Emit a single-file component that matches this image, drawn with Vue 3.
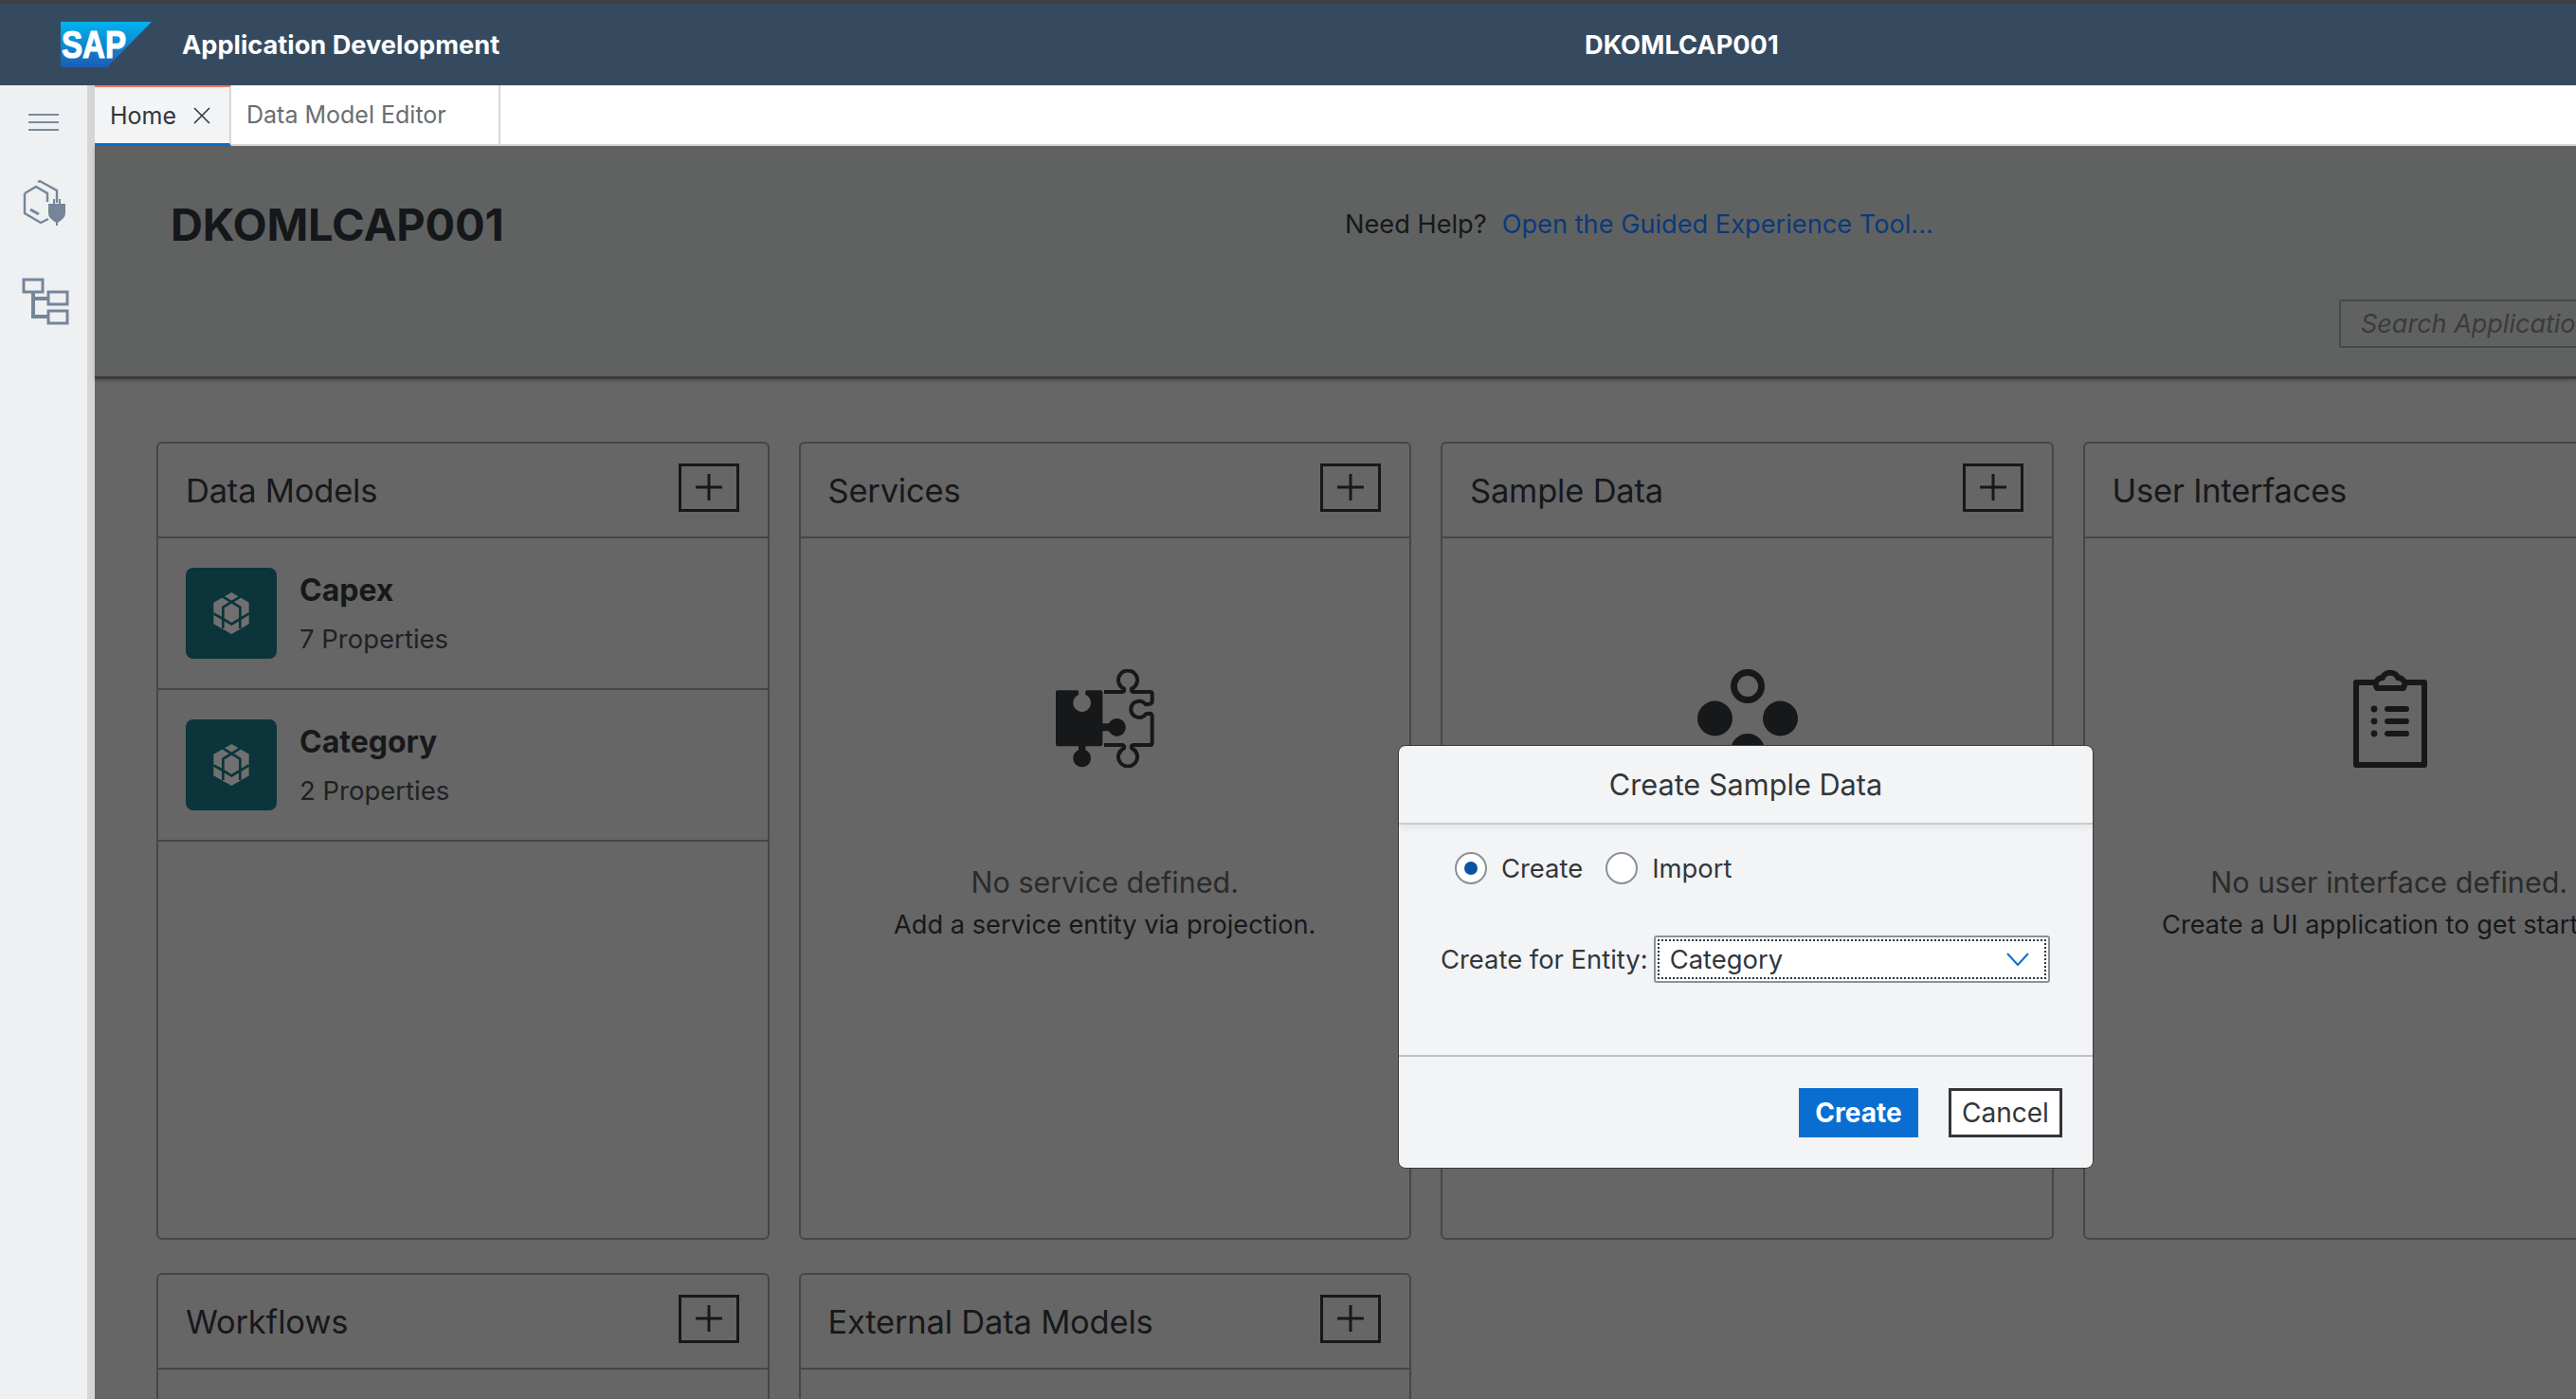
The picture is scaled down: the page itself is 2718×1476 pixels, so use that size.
<script setup>
const cards = [
  { title: 'Data Models', models: [
    { name: 'Capex', props: '7 Properties' },
    { name: 'Category', props: '2 Properties' },
  ] },
  { title: 'Services', icon: 'puzzle', empty: 'No service defined.', hint: 'Add a service entity via projection.' },
  { title: 'Sample Data', icon: 'dots', empty: '', hint: '' },
  { title: 'User Interfaces', icon: 'clipboard', empty: 'No user interface defined.', hint: 'Create a UI application to get started.', noAdd: true },
  { title: 'Workflows' },
  { title: 'External Data Models' },
]
</script>

<template>
  <div class="page">
    <header class="shell">
      <div class="brand">
        <svg class="logo" viewBox="0 0 96 48" width="96" height="48">
          <defs>
            <linearGradient id="sapGrad" x1="0" y1="0" x2="0" y2="1">
              <stop offset="0" stop-color="#00b4ee" />
              <stop offset="1" stop-color="#1d5cb5" />
            </linearGradient>
          </defs>
          <polygon points="0,0 96,0 49,48 0,48" fill="url(#sapGrad)" />
          <text x="1" y="38" class="logo-text" textLength="68" lengthAdjust="spacingAndGlyphs">SAP</text>
        </svg>
        <span class="app-name">Application Development</span>
      </div>
      <span class="app-id">DKOMLCAP001</span>
    </header>

    <div class="below">
      <aside class="rail">
        <div class="menu"><i></i><i></i><i></i></div>
        <svg class="rail-icon plug" viewBox="0 0 48 48" width="48" height="48" fill="none" stroke="#75869a" stroke-width="2.4">
          <path d="M2 10 L2 31 L19 41 L27 37" />
          <path d="M2 10 L14 3 L26 10 L26 19" />
          <path d="M16 -2 L18 -3 L36 7 L36 20" />
          <path d="M8 27 L17 32" stroke-width="3" />
          <path d="M28 22 h16 v9 q0 5 -8 9 q-8 -4 -8 -9 z M33 22 v-6 M39 22 v-6 M36 40 v4" fill="#75869a" stroke-width="2" />
        </svg>
        <svg class="rail-icon tree" viewBox="0 0 50 50" width="50" height="50" fill="#eef0f2" stroke="#75869a" stroke-width="3">
          <rect x="2" y="2" width="20" height="13" />
          <rect x="28" y="15" width="20" height="13" />
          <rect x="28" y="35" width="20" height="13" />
          <path d="M12 15 V41 H28 M12 22 H28" fill="none" stroke-width="4" />
        </svg>
      </aside>

      <div class="workspace">
        <nav class="tabs">
          <div class="tab active">Home <span class="close">
            <svg viewBox="0 0 18 18" width="18" height="18" stroke="#32363a" stroke-width="1.6"><path d="M1 1 L17 17 M17 1 L1 17" /></svg>
          </span></div>
          <div class="tab">Data Model Editor</div>
        </nav>

        <main class="content">
          <section class="head">
            <div class="head-row">
              <h1>DKOMLCAP001</h1>
              <p class="help">Need Help?<a>Open the Guided Experience Tool...</a></p>
            </div>
            <div class="search">Search Application Content</div>
          </section>

          <section class="grid">
            <article v-for="card in cards" :key="card.title" class="card">
              <div class="card-head">
                <h2>{{ card.title }}</h2>
                <button v-if="!card.noAdd" class="add">
                  <svg viewBox="0 0 28 28" width="28" height="28" stroke="#17181a" stroke-width="3"><path d="M14 0 V28 M0 14 H28" /></svg>
                </button>
              </div>

              <div v-for="m in card.models" :key="m.name" class="row">
                <div class="tile">
                  <svg viewBox="0 0 288 288" width="96" height="96">
                    <polygon points="145,78 200,110 200,178 145,210 88,178 88,110" fill="#707070" />
                    <path d="M118 92 L172 125 V192 M172 92 L118 125 V192 M118 125 L145 108 L172 125 M88 145 L118 162 L145 178 L172 162 L200 145" fill="none" stroke="#0b343b" stroke-width="8" />
                  </svg>
                </div>
                <div>
                  <div class="row-name">{{ m.name }}</div>
                  <div class="row-props">{{ m.props }}</div>
                </div>
              </div>

              <div v-if="card.icon" class="empty">
                <svg v-if="card.icon === 'puzzle'" viewBox="0 0 312 312" width="104" height="104">
                  <path d="M6 67 H68 Q74 67 72 81 A28 28 0 1 0 94 81 Q92 67 98 67 H142 Q148 67 148 73 V172 H168 A28 28 0 1 1 168 196 H148 V238 Q148 244 142 244 H94 V256 A28 28 0 1 1 72 256 V244 H6 Q0 244 0 238 V73 Q0 67 6 67 Z" fill="#16181a" />
                  <path d="M153 72 H210 Q218 72 216 62 A30 30 0 1 1 240 62 Q238 72 246 72 H298 Q305 72 305 79 V100 Q305 110 296 110 L285 112 A26 26 0 1 0 285 142 L296 140 Q305 140 305 150 V233 Q305 240 298 240 H246 Q238 240 240 250 A30 30 0 1 1 216 250 Q218 240 210 240 H153" fill="none" stroke="#16181a" stroke-width="12" stroke-linejoin="round" />
                </svg>
                <svg v-else-if="card.icon === 'dots'" class="nudge" viewBox="0 0 106 104" width="106" height="104">
                  <circle cx="53" cy="18" r="14.5" fill="none" stroke="#16181a" stroke-width="7" />
                  <circle cx="18.5" cy="52" r="18.5" fill="#16181a" />
                  <circle cx="87.5" cy="52" r="18.5" fill="#16181a" />
                  <circle cx="53" cy="86" r="18" fill="#16181a" />
                </svg>
                <svg v-else class="nudge" viewBox="0 0 78 104" width="78" height="104" fill="none" stroke="#16181a">
                  <path d="M24 14 H3 V101 H75 V14 H54" stroke-width="6" stroke-linejoin="round" />
                  <path d="M25 20 C21 12 28 9 31 9 C33 2 45 2 47 9 C50 9 57 12 53 20 Z" stroke-width="6" stroke-linejoin="round" />
                  <g fill="#16181a" stroke="none">
                    <circle cx="22" cy="42" r="3.4" /><circle cx="22" cy="55" r="3.4" /><circle cx="22" cy="68" r="3.4" />
                    <rect x="33" y="39" width="26" height="6" rx="3" /><rect x="33" y="52" width="26" height="6" rx="3" /><rect x="33" y="65" width="26" height="6" rx="3" />
                  </g>
                </svg>
                <p class="empty-title">{{ card.empty }}</p>
                <p class="empty-hint">{{ card.hint }}</p>
              </div>
            </article>
          </section>
        </main>
      </div>
    </div>

    <div class="dialog">
      <div class="dialog-title">Create Sample Data</div>
      <div class="dialog-body">
        <div class="radios">
          <span class="radio on"></span><span class="radio-label">Create</span>
          <span class="radio"></span><span class="radio-label">Import</span>
        </div>
        <div class="field">
          <label>Create for Entity:</label>
          <div class="select">
            <span>Category</span>
            <svg viewBox="0 0 24 14" width="24" height="14" fill="none" stroke="#0a6ed1" stroke-width="2"><path d="M1 1 L12 13 L23 1" /></svg>
          </div>
        </div>
      </div>
      <div class="dialog-foot">
        <button class="btn primary">Create</button>
        <button class="btn">Cancel</button>
      </div>
    </div>
  </div>
</template>

<style>
html, body {
  margin: 0;
  overflow: hidden;
}
</style>

<style scoped>
* {
  box-sizing: border-box;
}

.page {
  position: relative;
  width: 2718px;
  height: 1476px;
  overflow: hidden;
  display: flex;
  flex-direction: column;
  font-family: Inter, "Liberation Sans", sans-serif;
  color: #17181a;
}

.shell {
  flex: none;
  height: 90px;
  display: flex;
  align-items: center;
  padding-left: 64px;
  background: #364a5f;
  border-top: 4px solid #3d3f41;
  color: #fff;
}

.brand {
  width: 1608px;
  display: flex;
  align-items: center;
  gap: 32px;
}

.logo-text {
  font-family: "Liberation Sans", sans-serif;
  font-weight: 700;
  font-size: 40px;
  fill: #fff;
  stroke: #fff;
  stroke-width: 1.2px;
}

.app-name,
.app-id {
  font-size: 27.2px;
  font-weight: 700;
}

.below {
  flex: 1;
  display: flex;
  min-height: 0;
}

.rail {
  flex: none;
  width: 100px;
  background: #eef0f2;
  border-right: 8px solid #d5d5d5;
  display: flex;
  flex-direction: column;
  align-items: center;
}

.menu {
  margin-top: 30px;
  width: 32px;
  display: flex;
  flex-direction: column;
  gap: 6px;
}

.menu i {
  height: 2px;
  background: #7b8a99;
}

.plug {
  margin: 56px 0 0 4px;
  overflow: visible;
}

.tree {
  margin: 51px 0 0 4px;
}

.workspace {
  flex: 1;
  min-width: 0;
  display: flex;
  flex-direction: column;
}

.tabs {
  flex: none;
  height: 64px;
  display: flex;
  background: #fff;
  border-bottom: 2px solid #d9d9d9;
  font-size: 25px;
}

.tab {
  width: 284px;
  display: flex;
  align-items: center;
  padding: 0 16px;
  color: #6a6d70;
  border-right: 2px solid #d9d9d9;
}

.tab.active {
  width: 144px;
  color: #32363a;
  background: #f3f4f6;
  border-top: 2px solid #f0766a;
  border-bottom: 3px solid #0a6ed1;
  margin-bottom: -2px;
}

.close {
  display: flex;
  margin-left: 18px;
}

.content {
  flex: 1;
  min-height: 0;
  background: #666;
}

.head {
  height: 246px;
  padding: 58px 0 0 80px;
  background: #606261;
  border-bottom: 3px solid #3b3c3d;
  box-shadow: 0 2px 4px rgba(0, 0, 0, .2);
}

.head-row {
  display: flex;
  align-items: center;
}

h1 {
  margin: 0;
  width: 1239px;
  font-size: 47px;
  font-weight: 700;
  letter-spacing: -.2px;
  line-height: 50px;
  color: #15171a;
}

.help {
  margin: -1px 0 0;
  font-size: 27.2px;
  color: #17181a;
}

.help a {
  margin-left: 16px;
  color: #0b397a;
}

.search {
  margin: 54px 0 0 2288px;
  width: 500px;
  height: 51px;
  padding-left: 21px;
  display: flex;
  align-items: center;
  white-space: nowrap;
  font-size: 27px;
  font-style: italic;
  color: #3a3b3c;
  border: 2px solid #47484a;
  border-radius: 3px;
}

.grid {
  padding: 66px 0 0 65px;
  display: grid;
  grid-template-columns: repeat(4, 646.5px);
  grid-auto-rows: 842px;
  column-gap: 31px;
  row-gap: 35px;
}

.card {
  border: 2px solid #454648;
  border-radius: 6px;
  background: #666;
}

.card-head {
  height: 100px;
  padding: 0 30px 0 29px;
  display: flex;
  align-items: center;
  justify-content: space-between;
  border-bottom: 2px solid #454648;
}

h2 {
  margin: 1px 0 0;
  font-size: 34.5px;
  font-weight: 400;
  letter-spacing: -.2px;
  color: #17181a;
}

.add {
  width: 64px;
  height: 51px;
  margin-top: -6px;
  padding: 0;
  display: flex;
  align-items: center;
  justify-content: center;
  background: transparent;
  border: 3px solid #17181a;
}

.row {
  height: 160px;
  padding: 0 0 0 29px;
  display: flex;
  align-items: center;
  gap: 24px;
  border-bottom: 2px solid #454648;
}

.tile {
  width: 96px;
  height: 96px;
  background: #0b343b;
  border-radius: 8px;
}

.row-name {
  font-size: 32px;
  font-weight: 700;
  color: #17181a;
}

.row-props {
  margin-top: 15px;
  font-size: 27.5px;
  color: #202123;
}

.empty {
  padding-top: 138px;
  display: flex;
  flex-direction: column;
  align-items: center;
  white-space: nowrap;
}

.nudge {
  margin-left: 2px;
}

.empty p {
  margin: 0;
}

.empty-title {
  margin-top: 102px !important;
  font-size: 30.5px;
  color: #2a2b2d;
}

.empty-hint {
  margin-top: 10px !important;
  font-size: 27.2px;
  color: #17181a;
}

.dialog {
  position: absolute;
  left: 1475px;
  top: 786px;
  width: 734px;
  height: 447px;
  display: flex;
  flex-direction: column;
  background: #f3f4f6;
  border: 1px solid #3a3b3d;
  border-radius: 8px;
  color: #32363a;
  font-size: 27.4px;
}

.dialog-title {
  flex: none;
  height: 83px;
  display: flex;
  align-items: center;
  justify-content: center;
  font-size: 30.7px;
  border-bottom: 2px solid #c8cacc;
  box-shadow: 0 4px 8px rgba(0, 0, 0, .06);
}

.dialog-body {
  flex: 1;
  padding: 29px 0 0 44px;
  border-bottom: 2px solid #bfc1c3;
}

.radios {
  display: flex;
  align-items: center;
  padding-left: 15px;
}

.radio {
  width: 34px;
  height: 34px;
  border-radius: 50%;
  border: 2px solid #89919a;
  background: #fff;
  position: relative;
}

.radio.on::after {
  content: "";
  position: absolute;
  left: 8px;
  top: 8px;
  width: 14px;
  height: 14px;
  border-radius: 50%;
  background: #0854a0;
}

.radio-label {
  margin: 0 24px 0 15px;
}

.field {
  margin-top: 54px;
  display: flex;
  align-items: center;
  gap: 6px;
}

.select {
  width: 418px;
  height: 50px;
  padding: 0 20px 0 15px;
  display: flex;
  align-items: center;
  justify-content: space-between;
  background: #fff;
  border: 2px solid #89919a;
  border-radius: 3px;
  outline: 2px dotted #32363a;
  outline-offset: -6px;
}

.dialog-foot {
  flex: none;
  height: 117px;
  padding: 33px 32px 0 0;
  display: flex;
  justify-content: flex-end;
  align-items: flex-start;
  gap: 32px;
}

.btn {
  width: 120px;
  height: 52px;
  padding: 0;
  font-family: inherit;
  font-size: 28px;
  color: #32363a;
  background: #fff;
  border: 3px solid #32363a;
}

.btn.primary {
  width: 126px;
  color: #fff;
  font-weight: 700;
  background: #0a6ed1;
  border: 0;
}
</style>
